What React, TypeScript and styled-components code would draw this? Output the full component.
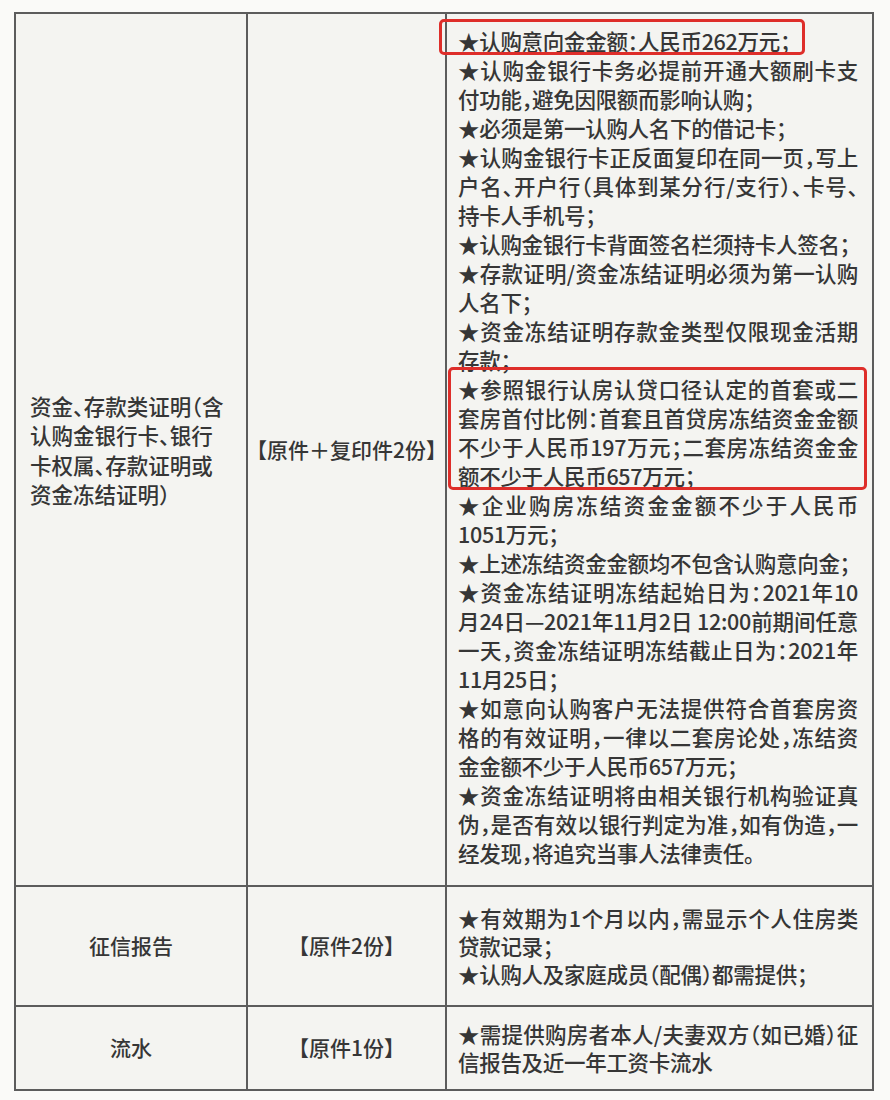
import styled, { createGlobalStyle } from 'styled-components';

const GlobalStyle = createGlobalStyle`
  html, body {
    margin: 0;
    padding: 0;
    background: #fafaf8;
  }
  body {
    font-family: "Noto Sans CJK SC", "Noto Sans", sans-serif;
    color: #363636;
  }
`;

type Item = { lines: string[]; mark?: 'short' | 'wide' };

const moneyNotes: Item[] = [
  { lines: ['★认购意向金金额：人民币262万元；'], mark: 'short' },
  { lines: ['★认购金银行卡务必提前开通大额刷卡支', '付功能，避免因限额而影响认购；'] },
  { lines: ['★必须是第一认购人名下的借记卡；'] },
  {
    lines: [
      '★认购金银行卡正反面复印在同一页，写上',
      '户名、开户行（具体到某分行/支行）、卡号、',
      '持卡人手机号；',
    ],
  },
  { lines: ['★认购金银行卡背面签名栏须持卡人签名；'] },
  { lines: ['★存款证明/资金冻结证明必须为第一认购', '人名下；'] },
  { lines: ['★资金冻结证明存款金类型仅限现金活期', '存款；'] },
  {
    lines: [
      '★参照银行认房认贷口径认定的首套或二',
      '套房首付比例：首套且首贷房冻结资金金额',
      '不少于人民币197万元；二套房冻结资金金',
      '额不少于人民币657万元；',
    ],
    mark: 'wide',
  },
  { lines: ['★企业购房冻结资金金额不少于人民币', '1051万元；'] },
  { lines: ['★上述冻结资金金额均不包含认购意向金；'] },
  {
    lines: [
      '★资金冻结证明冻结起始日为：2021年10',
      '月24日—2021年11月2日 12:00前期间任意',
      '一天，资金冻结证明冻结截止日为：2021年',
      '11月25日；',
    ],
  },
  {
    lines: [
      '★如意向认购客户无法提供符合首套房资',
      '格的有效证明，一律以二套房论处，冻结资',
      '金金额不少于人民币657万元；',
    ],
  },
  {
    lines: [
      '★资金冻结证明将由相关银行机构验证真',
      '伪，是否有效以银行判定为准，如有伪造，一',
      '经发现，将追究当事人法律责任。',
    ],
  },
];

const creditNotes: Item[] = [
  { lines: ['★有效期为1个月以内，需显示个人住房类', '贷款记录；'] },
  { lines: ['★认购人及家庭成员（配偶）都需提供；'] },
];

const flowNotes: Item[] = [
  { lines: ['★需提供购房者本人/夫妻双方（如已婚）征', '信报告及近一年工资卡流水'] },
];

const Page = styled.div`
  padding: 12px 0 10px 14px;
`;

const Table = styled.div`
  display: grid;
  grid-template-columns: 230px 197px 425px;
  grid-template-rows: 871px 118px 82px;
  gap: 2px;
  padding: 2px;
  width: max-content;
  background: #5c5c5c;
`;

const Cell = styled.div<{ $center?: boolean }>`
  position: relative;
  display: flex;
  flex-direction: column;
  justify-content: center;
  align-items: ${(p) => (p.$center ? 'center' : 'stretch')};
  background: #f4f4f1;
  font-size: 21px;
  font-weight: 500;
  line-height: 29.5px;
  font-feature-settings: 'halt';
  text-align: ${(p) => (p.$center ? 'center' : 'left')};
`;

const NameText = styled.div`
  padding: 0 8px 0 14px;
  font-size: 21.5px;
`;

const NotesCell = styled(Cell)`
  justify-content: flex-start;
  padding: 12px 14px 12px 11px;
  line-height: 29px;
`;

const SmallNotesCell = styled(Cell)`
  padding: 0 14px 0 11px;
  line-height: 28px;
`;

const Line = styled.div<{ $justify?: boolean }>`
  font-size: 21.5px;
  letter-spacing: -0.3px;
  text-align: ${(p) => (p.$justify ? 'justify' : 'left')};
  text-align-last: ${(p) => (p.$justify ? 'justify' : 'auto')};
`;

const Mark = styled.div<{ $short?: boolean }>`
  position: relative;
  align-self: ${(p) => (p.$short ? 'flex-start' : 'stretch')};

  &::before {
    content: '';
    position: absolute;
    top: -7px;
    bottom: 0;
    left: ${(p) => (p.$short ? '-19px' : '-10px')};
    right: ${(p) => (p.$short ? '-15px' : '-9px')};
    border: 3px solid #de2e2a;
    border-radius: 5px;
    pointer-events: none;
  }
`;

function Notes({ items }: { items: Item[] }) {
  return (
    <>
      {items.map((item, i) => {
        const lines = item.lines.map((l, j) => (
          <Line key={j} $justify={j < item.lines.length - 1}>
            {l}
          </Line>
        ));
        if (item.mark) {
          return (
            <Mark key={i} $short={item.mark === 'short'}>
              {lines}
            </Mark>
          );
        }
        return <div key={i}>{lines}</div>;
      })}
    </>
  );
}

export default function App() {
  return (
    <>
      <GlobalStyle />
      <Page>
        <Table>
          <Cell>
            <NameText>
              资金、存款类证明（含
              <br />
              认购金银行卡、银行
              <br />
              卡权属、存款证明或
              <br />
              资金冻结证明）
            </NameText>
          </Cell>
          <Cell $center>【原件＋复印件2份】</Cell>
          <NotesCell>
            <Notes items={moneyNotes} />
          </NotesCell>

          <Cell $center>征信报告</Cell>
          <Cell $center>【原件2份】</Cell>
          <SmallNotesCell>
            <Notes items={creditNotes} />
          </SmallNotesCell>

          <Cell $center>流水</Cell>
          <Cell $center>【原件1份】</Cell>
          <SmallNotesCell>
            <Notes items={flowNotes} />
          </SmallNotesCell>
        </Table>
      </Page>
    </>
  );
}
